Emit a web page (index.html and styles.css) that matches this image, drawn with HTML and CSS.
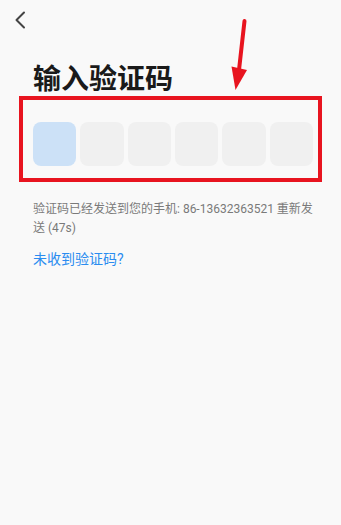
FILE: index.html
```html
<!DOCTYPE html>
<html lang="zh-CN">
<head>
<meta charset="utf-8">
<title>输入验证码</title>
<link rel="stylesheet" href="styles.css">
</head>
<body>
<div class="page">
  <header class="topbar">
    <svg class="back" width="12" height="18" viewBox="0 0 12 18">
      <path d="M10 1.5 L2.5 9 L10 16.5" fill="none" stroke="#444" stroke-width="2" stroke-linecap="round" stroke-linejoin="round"/>
    </svg>
  </header>
  <main class="content">
    <h1 class="title">输入验证码</h1>
    <div class="code-row">
      <div class="cell active"></div>
      <div class="cell"></div>
      <div class="cell"></div>
      <div class="cell"></div>
      <div class="cell"></div>
      <div class="cell"></div>
    </div>
    <p class="hint">验证码已经发送到您的手机: 86-13632363521 重新发<br>送 (47s)</p>
    <a class="link">未收到验证码?</a>
  </main>
  <div class="highlight"></div>
  <svg class="arrow" width="341" height="100" viewBox="0 0 341 100">
    <line x1="244.5" y1="21" x2="239" y2="70" stroke="#e8141f" stroke-width="4" stroke-linecap="round"/>
    <polygon points="231.5,66.5 247,70 235.5,90" fill="#e8141f"/>
  </svg>
</div>
</body>
</html>
```
FILE: styles.css
```css
html, body {
  margin: 0;
  padding: 0;
  background: #f9f9f9;
}
body {
  font-family: Roboto, "Noto Sans CJK SC", "Noto Sans", sans-serif;
}
.page {
  position: relative;
  width: 341px;
  height: 525px;
  overflow: hidden;
}
.topbar {
  height: 40px;
  padding-left: 14px;
  display: flex;
  align-items: flex-start;
  padding-top: 11px;
  box-sizing: border-box;
}
.back {
  display: block;
}
.content {
  padding: 0 28px 0 33px;
}
.title {
  margin: 0;
  padding-top: 20px;
  font-size: 28px;
  line-height: 40px;
  font-weight: 700;
  color: #1a1a1a;
  letter-spacing: 0;
}
.code-row {
  margin-top: 22px;
  display: flex;
  gap: 4px;
  width: 280px;
}
.cell {
  flex: 1;
  height: 44px;
  border-radius: 8px;
  background: #f0f0f0;
}
.cell.active {
  background: #cce1f7;
}
.hint {
  margin: 34px 0 0 0;
  font-size: 12px;
  line-height: 19px;
  color: #7a7a7a;
}
.link {
  display: block;
  margin-top: 11px;
  font-size: 14px;
  line-height: 20px;
  color: #2a8cf0;
}
.highlight {
  position: absolute;
  left: 19px;
  top: 96px;
  width: 303px;
  height: 86px;
  box-sizing: border-box;
  border: 4px solid #e8141f;
}
.arrow {
  position: absolute;
  left: 0;
  top: 0;
}
```
